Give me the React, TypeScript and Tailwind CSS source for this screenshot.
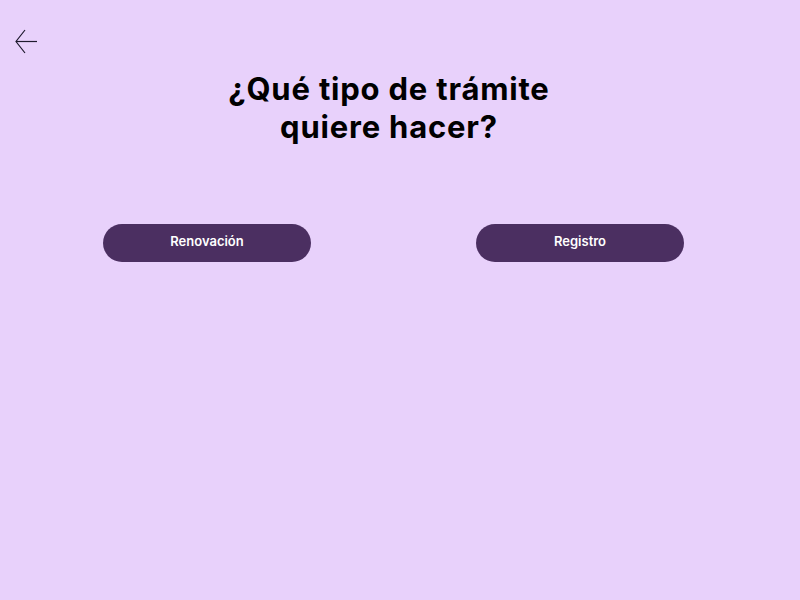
import React from "react";

const BackArrow = () => (
  <svg width="30" height="30" viewBox="0 0 30 30" fill="none" stroke="#1f1a2e" strokeWidth="1.2">
    <path d="M3 14.5 H24" />
    <path d="M12 3 L3 14.5 L12 26" />
  </svg>
);

const ChoiceButton = ({ label }: { label: string }) => (
  <button className="w-[208px] h-[38px] rounded-full bg-[#4b2f61] text-white text-[13px] font-semibold flex items-center justify-center pb-[3px]">
    {label}
  </button>
);

export default function App() {
  return (
    <div
      className="w-[800px] h-[600px] bg-[#e8d1fb] flex flex-col"
      style={{ fontFamily: "Inter, 'Noto Sans', sans-serif" }}
    >
      <div className="pt-[27px] pl-[13px] h-[60px]">
        <button className="block">
          <BackArrow />
        </button>
      </div>
      <h1 className="mt-[10px] pr-[22px] text-center text-[31px] leading-[38px] font-bold text-black tracking-[0.8px]">
        ¿Qué tipo de trámite
        <br />
        quiere hacer?
      </h1>
      <div className="mt-[78px] flex pl-[103px] gap-[165px]">
        <ChoiceButton label="Renovación" />
        <ChoiceButton label="Registro" />
      </div>
    </div>
  );
}
